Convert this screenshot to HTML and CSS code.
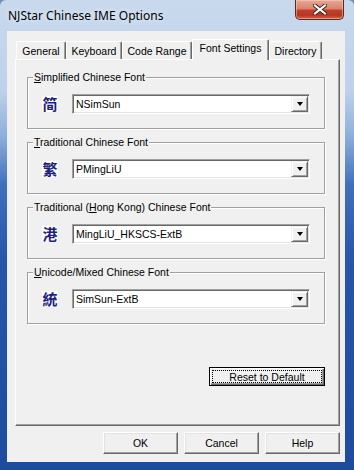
FILE: index.html
```html
<!DOCTYPE html>
<html lang="en">
  <head>
    <meta charset="UTF-8" />
    <meta name="viewport" content="width=device-width, initial-scale=1.0" />
    <title>NJStar Chinese IME Options</title>
    <link rel="stylesheet" href="styles.css">
  </head>
  <body>
    <div class="window">
      <div class="titlebar">
        <span class="title">NJStar Chinese IME Options</span>
        <div class="close-btn">
          <svg width="14" height="11" viewBox="0 0 14 11">
            <path d="M2 1.5 L12 9.5 M12 1.5 L2 9.5" stroke="#3a1a16" stroke-width="4" stroke-linecap="square" />
            <path d="M2 1.5 L12 9.5 M12 1.5 L2 9.5" stroke="#fff" stroke-width="2.2" stroke-linecap="square" />
          </svg>
        </div>
      </div>

      <div class="client">
        <div class="tabs">
          <div class="tab tab-general">General</div>
          <div class="tab tab-keyboard">Keyboard</div>
          <div class="tab tab-range">Code Range</div>
          <div class="tab tab-font active">Font Settings</div>
          <div class="tab tab-dir">Directory</div>
        </div>

        <div class="panel">
          <fieldset class="group">
            <legend><u>S</u>implified Chinese Font</legend>
            <div class="font-row">
              <span class="glyph sc">简</span>
              <div class="combo"><span class="combo-text">NSimSun</span><span class="combo-btn"><i class="arrow"></i></span></div>
            </div>
          </fieldset>

          <fieldset class="group">
            <legend><u>T</u>raditional Chinese Font</legend>
            <div class="font-row">
              <span class="glyph tc">繁</span>
              <div class="combo"><span class="combo-text">PMingLiU</span><span class="combo-btn"><i class="arrow"></i></span></div>
            </div>
          </fieldset>

          <fieldset class="group">
            <legend>Traditional (<u>H</u>ong Kong) Chinese Font</legend>
            <div class="font-row">
              <span class="glyph tc">港</span>
              <div class="combo"><span class="combo-text">MingLiU_HKSCS-ExtB</span><span class="combo-btn"><i class="arrow"></i></span></div>
            </div>
          </fieldset>

          <fieldset class="group">
            <legend><u>U</u>nicode/Mixed Chinese Font</legend>
            <div class="font-row">
              <span class="glyph tc">統</span>
              <div class="combo"><span class="combo-text">SimSun-ExtB</span><span class="combo-btn"><i class="arrow"></i></span></div>
            </div>
          </fieldset>

          <div class="reset-row">
            <button class="btn btn-default">Reset to Default</button>
          </div>
        </div>

        <div class="actions">
          <button class="btn btn-action">OK</button>
          <button class="btn btn-action">Cancel</button>
          <button class="btn btn-action">Help</button>
        </div>
      </div>
    </div>
  </body>
</html>
```

FILE: styles.css
```css
body {
  margin: 0;
  background: #6f8fb8;
  font-family: "Liberation Sans", Arial, sans-serif;
}

.window {
  width: 354px;
  height: 470px;
  box-sizing: border-box;
  padding: 0 9px 8px 7px;
  display: flex;
  flex-direction: column;
  background: linear-gradient(180deg, #c8d9ed 0, #bed2ea 90px, #8fb0dc 135px, #3f6fbd 185px, #2656a8 260px, #1d4c9e 100%);
  border-radius: 6px 6px 0 0;
}

/* title bar */
.titlebar {
  height: 31px;
  display: flex;
  justify-content: space-between;
  align-items: flex-start;
  padding-left: 1px;
}

.title {
  margin-top: 8px;
  font-family: "Noto Sans", sans-serif;
  font-size: 12px;
  line-height: 15px;
  color: #000;
  text-shadow: 0 0 6px rgba(255, 255, 255, 0.9);
}

.close-btn {
  width: 49px;
  height: 20px;
  box-sizing: border-box;
  margin-right: 1px;
  display: flex;
  justify-content: center;
  align-items: center;
  border: 1px solid #5a2a22;
  border-top: none;
  border-radius: 0 0 5px 5px;
  background: linear-gradient(180deg, #e7a897 0, #d98470 45%, #c1402b 55%, #b73522 80%, #d8644a 100%);
  box-shadow: inset 0 0 0 1px rgba(255, 220, 200, 0.45);
}

/* client area */
.client {
  flex: 1;
  display: flex;
  flex-direction: column;
  padding: 8px 5px 8px 8px;
  background: #f0f0f0;
  font-size: 10.5px;
  color: #000;
}

.tabs {
  height: 20px;
  display: flex;
  align-items: flex-end;
  padding-left: 1px;
}

.tab {
  height: 18px;
  box-sizing: border-box;
  display: flex;
  justify-content: center;
  align-items: center;
  border-top: 1px solid #fff;
  border-left: 1px solid #fff;
  border-right: 1px solid #696969;
  border-radius: 2px 2px 0 0;
  box-shadow: inset -1px 0 0 #a0a0a0;
  background: #f0f0f0;
}

.tab-general { width: 50px; }
.tab-keyboard { width: 56px; }
.tab-range { width: 70px; }
.tab-font { width: 77px; }
.tab-dir { width: 53px; }

.tab.active {
  height: 21px;
  margin-bottom: -1px;
  padding-bottom: 4px;
  position: relative;
  z-index: 1;
}

.panel {
  height: 367px;
  box-sizing: border-box;
  display: flex;
  flex-direction: column;
  padding: 11px 14px 0 11px;
  border-top: 1px solid #fff;
  border-left: 1px solid #fff;
  border-right: 1px solid #696969;
  border-bottom: 1px solid #696969;
  box-shadow: inset -1px -1px 0 #a0a0a0;
}

/* group boxes */
.group {
  width: 298px;
  box-sizing: border-box;
  margin: 0;
  padding: 10px 0 14px 0;
  border: 1px solid #a0a0a0;
  box-shadow: 1px 1px 0 #fff, inset 1px 1px 0 #fff;
}

.group + .group {
  margin-top: 7px;
}

.group legend {
  margin-left: 5px;
  padding: 0 1px;
  line-height: 13px;
  background: #f0f0f0;
}

.font-row {
  display: flex;
  align-items: center;
  margin-left: 14px;
}

.glyph {
  width: 16px;
  height: 16px;
  display: flex;
  justify-content: center;
  align-items: center;
  background: #fff;
  color: #1e1e7c;
  font-size: 15px;
  font-weight: bold;
  line-height: 16px;
}

.glyph.sc { font-family: "Noto Sans CJK SC", sans-serif; }
.glyph.tc { font-family: "Noto Sans CJK TC", sans-serif; }

.combo {
  width: 238px;
  height: 20px;
  box-sizing: border-box;
  margin-left: 14px;
  display: flex;
  align-items: center;
  padding: 1px;
  border: 1px solid;
  border-color: #a0a0a0 #fff #fff #a0a0a0;
  box-shadow: inset 1px 1px 0 #696969, inset -1px -1px 0 #e3e3e3;
  background: #fff;
}

.combo-text {
  flex: 1;
  padding-left: 2px;
  line-height: 16px;
}

.combo-btn {
  width: 17px;
  height: 16px;
  box-sizing: border-box;
  display: flex;
  justify-content: center;
  align-items: center;
  border: 1px solid;
  border-color: #f0f0f0 #696969 #696969 #f0f0f0;
  box-shadow: inset 1px 1px 0 #fff, inset -1px -1px 0 #a0a0a0;
  background: #f0f0f0;
}

.arrow {
  width: 0;
  height: 0;
  border-left: 3.5px solid transparent;
  border-right: 3.5px solid transparent;
  border-top: 4px solid #000;
}

/* buttons */
.btn {
  box-sizing: border-box;
  padding: 0;
  font-family: "Liberation Sans", Arial, sans-serif;
  font-size: 10.5px;
  color: #000;
  background: #f0f0f0;
  border: 1px solid;
  border-color: #fff #696969 #696969 #fff;
  box-shadow: inset -1px -1px 0 #a0a0a0, inset 1px 1px 0 #e3e3e3;
}

.reset-row {
  display: flex;
  justify-content: flex-end;
  margin-top: 43px;
}

.btn-default {
  width: 116px;
  height: 19px;
  border: 1px solid #000;
  box-shadow: inset 1px 1px 0 #fff, inset -1px -1px 0 #696969, inset -2px -2px 0 #a0a0a0;
  outline: 1px dotted #000;
  outline-offset: -4px;
}

.actions {
  display: flex;
  justify-content: flex-end;
  gap: 6px;
  margin-top: 6px;
}

.btn-action {
  width: 75px;
  height: 22px;
}
```
